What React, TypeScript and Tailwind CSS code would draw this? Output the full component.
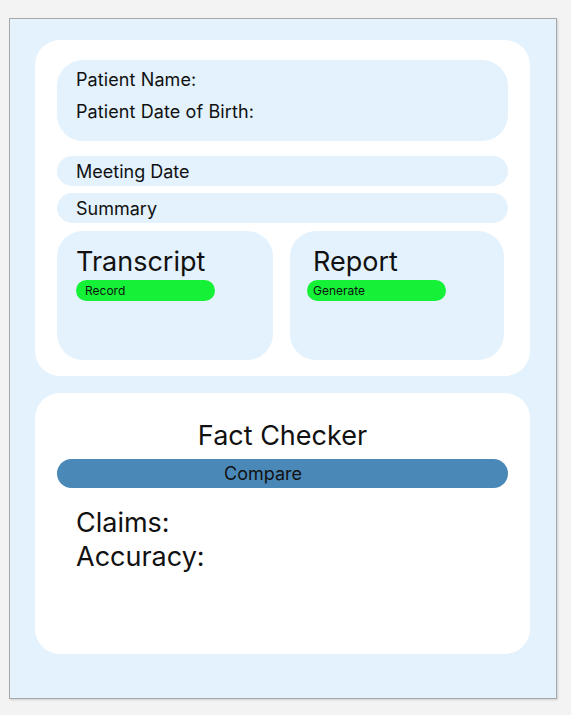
const font = { fontFamily: "Inter, 'Noto Sans', sans-serif" };

function Field({ label }: { label: string }) {
  return (
    <div className="h-[30px] rounded-full bg-[#e3f2fd] pl-[19px] flex items-center text-[18px] text-[#111]">
      {label}
    </div>
  );
}

function ActionCard({ title, action, pad, titlePad, btnPad }: { title: string; action: string; pad: string; titlePad: string; btnPad: string }) {
  return (
    <div className={`h-[129px] rounded-[26px] bg-[#e3f2fd] pt-[14px] ${pad}`}>
      <h3 className={`text-[27px] leading-[34px] text-[#111] ${titlePad}`}>{title}</h3>
      <button className={`mt-[1px] h-[21px] w-[139px] rounded-full bg-[#14f137] ${btnPad} flex items-center text-[12px] text-[#111]`}>
        {action}
      </button>
    </div>
  );
}

export default function App() {
  return (
    <div className="min-h-[715px] bg-[#f3f3f3] pt-[18px] pl-[9px]" style={font}>
      <div className="w-[548px] h-[681px] border border-[#a8a8a8] bg-[#e3f2fd] pl-[25px] pt-[21px] shadow-[1px_1px_2px_rgba(0,0,0,0.15)]">
        <section className="w-[495px] rounded-[25px] bg-white px-[22px] pt-[20px] pb-[16px]">
          <div className="h-[81px] rounded-[26px] bg-[#e3f2fd] pl-[19px] pt-[4px] text-[18px] leading-[32px] tracking-[0.1px] text-[#111]">
            <p>Patient Name:</p>
            <p>Patient Date of Birth:</p>
          </div>
          <div className="mt-[15px] flex flex-col gap-[7px]">
            <Field label="Meeting Date" />
            <Field label="Summary" />
          </div>
          <div className="mt-[8px] flex gap-[17px]">
            <div className="w-[216px]">
              <ActionCard title="Transcript" action="Record" pad="pl-[19px]" titlePad="" btnPad="pl-[9px]" />
            </div>
            <div className="w-[214px]">
              <ActionCard title="Report" action="Generate" pad="pl-[17px] pr-[4px]" titlePad="pl-[6px]" btnPad="pl-[6px]" />
            </div>
          </div>
        </section>

        <section className="mt-[17px] w-[495px] h-[261px] rounded-[25px] bg-white px-[22px] pt-[27px]">
          <h2 className="text-center text-[27px] leading-[32px] text-[#111]">Fact Checker</h2>
          <button className="mt-[7px] h-[29px] w-full rounded-full bg-[#4a88b8] pl-[167px] text-left text-[18px] text-[#111]">
            Compare
          </button>
          <div className="mt-[18px] pl-[19px] text-[27px] leading-[34px] text-[#111]">
            <p>Claims:</p>
            <p>Accuracy:</p>
          </div>
        </section>
      </div>
    </div>
  );
}
